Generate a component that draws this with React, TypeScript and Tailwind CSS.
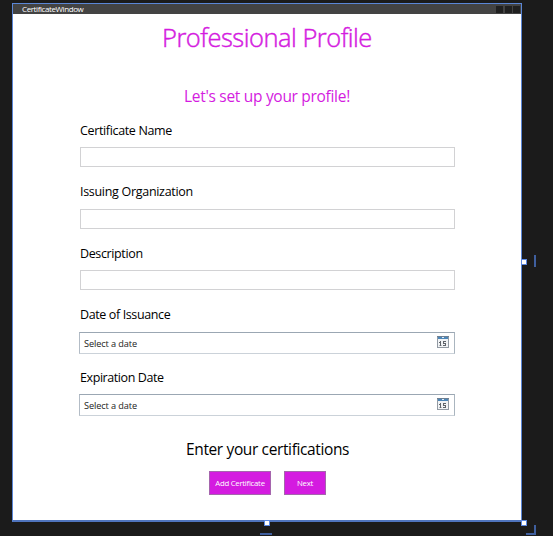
import React from "react";

const font = "font-['Open_Sans','Noto_Sans',sans-serif]";

function CalendarIcon() {
  return (
    <svg width="12" height="12" viewBox="0 0 12 12" className="mr-[5px] mb-[2px] shrink-0" shapeRendering="crispEdges">
      <rect x="0.5" y="0.5" width="11" height="11" fill="#f1f3f5" stroke="#929aa3" />
      <rect x="0" y="0" width="12" height="1" fill="#6d7f92" />
      <rect x="1" y="1" width="10" height="2" fill="#4c86b8" />
      <rect x="5" y="1" width="2" height="1" fill="#e4eef6" />
      <path d="M3 5h1v5h-1zM2 6h1v1h-1zM6 5h3v1h-3zM6 6h1v1h-1zM6 7h3v1h-3zM8 8h1v1h-1zM6 9h3v1h-3z" fill="#5f646a" />
      <path d="M2 9h1v1h-1zM4 9h1v1h-1z" fill="#b4b8bc" />
    </svg>
  );
}

function Label({ text, className }: { text: string; className: string }) {
  return <div className={`h-[17px] whitespace-nowrap text-[12.5px] leading-[17px] text-black ${className}`}>{text}</div>;
}

function TextField() {
  return <div className="h-5 w-[375px] border border-[#d2d2d4] bg-white" />;
}

function DateField() {
  return (
    <div className="-ml-px flex h-[22px] w-[376px] items-center justify-between border border-[#cbd2d9] border-t-[#9ba7b3] border-l-[#b3bcc6] border-r-[#aab5bf] bg-white">
      <span className="pl-1 pt-px text-[9.2px] leading-3 tracking-[-0.1px] text-[#222]">Select a date</span>
      <CalendarIcon />
    </div>
  );
}

function Handle({ className }: { className: string }) {
  return <div className={`absolute h-[6px] w-[6px] border border-[#5b87df] bg-white ${className}`} />;
}

export default function App() {
  return (
    <div className={`relative h-[536px] w-[553px] overflow-hidden bg-[#1b1b1b] pl-3 pt-[3px] ${font}`}>
      <div className="flex h-[519px] w-[510px] flex-col border border-[#5a86d6] border-b-2 border-b-[#4f74bd] bg-white">
        <div className="flex h-[10px] shrink-0 items-center justify-between bg-[#434343] pl-[9px] pr-px">
          <span className="text-[8px] leading-[10px] tracking-[-0.4px] text-white">CertificateWindow</span>
          <div className="flex">
            <div className="mr-[2px] h-[7px] w-[7px] bg-[#202020]" />
            <div className="mr-px h-[7px] w-[7px] bg-[#202020]" />
            <div className="h-[7px] w-[7px] bg-[#202020]" />
          </div>
        </div>
        <h1 className="mt-[5px] h-9 whitespace-nowrap pl-[149px] text-[25.5px] font-light leading-9 tracking-[-0.5px] text-[#d41be0] [-webkit-text-stroke:0.45px_#d41be0]">Professional Profile</h1>
        <h2 className="mt-[29px] h-6 whitespace-nowrap pl-[171px] text-[15.5px] leading-6 tracking-[-0.3px] text-[#d41be0]">Let's set up your profile!</h2>
        <div className="pl-[67px]">
          <Label text="Certificate Name" className="mt-[14px] tracking-[-0.35px]" />
          <div className="mt-2"><TextField /></div>
          <Label text="Issuing Organization" className="mt-4 tracking-[-0.3px]" />
          <div className="mt-[9px]"><TextField /></div>
          <Label text="Description" className="mt-4 tracking-[-0.37px]" />
          <div className="mt-2"><TextField /></div>
          <Label text="Date of Issuance" className="mt-4 tracking-[-0.38px]" />
          <div className="mt-[9px]"><DateField /></div>
          <Label text="Expiration Date" className="mt-[15px] tracking-[-0.42px]" />
          <div className="mt-[8px]"><DateField /></div>
        </div>
        <div className="mt-[21px] h-6 whitespace-nowrap pl-[173px] text-[15.5px] leading-6 tracking-[-0.37px] text-black">Enter your certifications</div>
        <div className="mt-[10px] flex gap-[13px] pl-[196px]">
          <button className="h-6 w-[62px] whitespace-nowrap border border-[#a565ad] bg-[#d41be0] text-[7.8px] leading-3 tracking-[-0.27px] text-white">Add Certificate</button>
          <button className="h-6 w-[42px] whitespace-nowrap border border-[#a565ad] bg-[#d41be0] text-[7.8px] leading-3 tracking-[-0.25px] text-white">Next</button>
        </div>
      </div>
      <Handle className="left-[521px] top-[259px]" />
      <Handle className="left-[264px] top-[520px]" />
      <Handle className="left-[521px] top-[520px]" />
      <div className="absolute left-[534px] top-[255px] h-3 w-[2px] bg-[#3f5f9f]" />
      <div className="absolute left-[260px] top-[533px] h-[2px] w-3 bg-[#3f5f9f]" />
      <div className="absolute left-[526px] top-[525px] h-[10px] w-[10px] border-b-2 border-r-2 border-[#3f5f9f]" />
    </div>
  );
}
